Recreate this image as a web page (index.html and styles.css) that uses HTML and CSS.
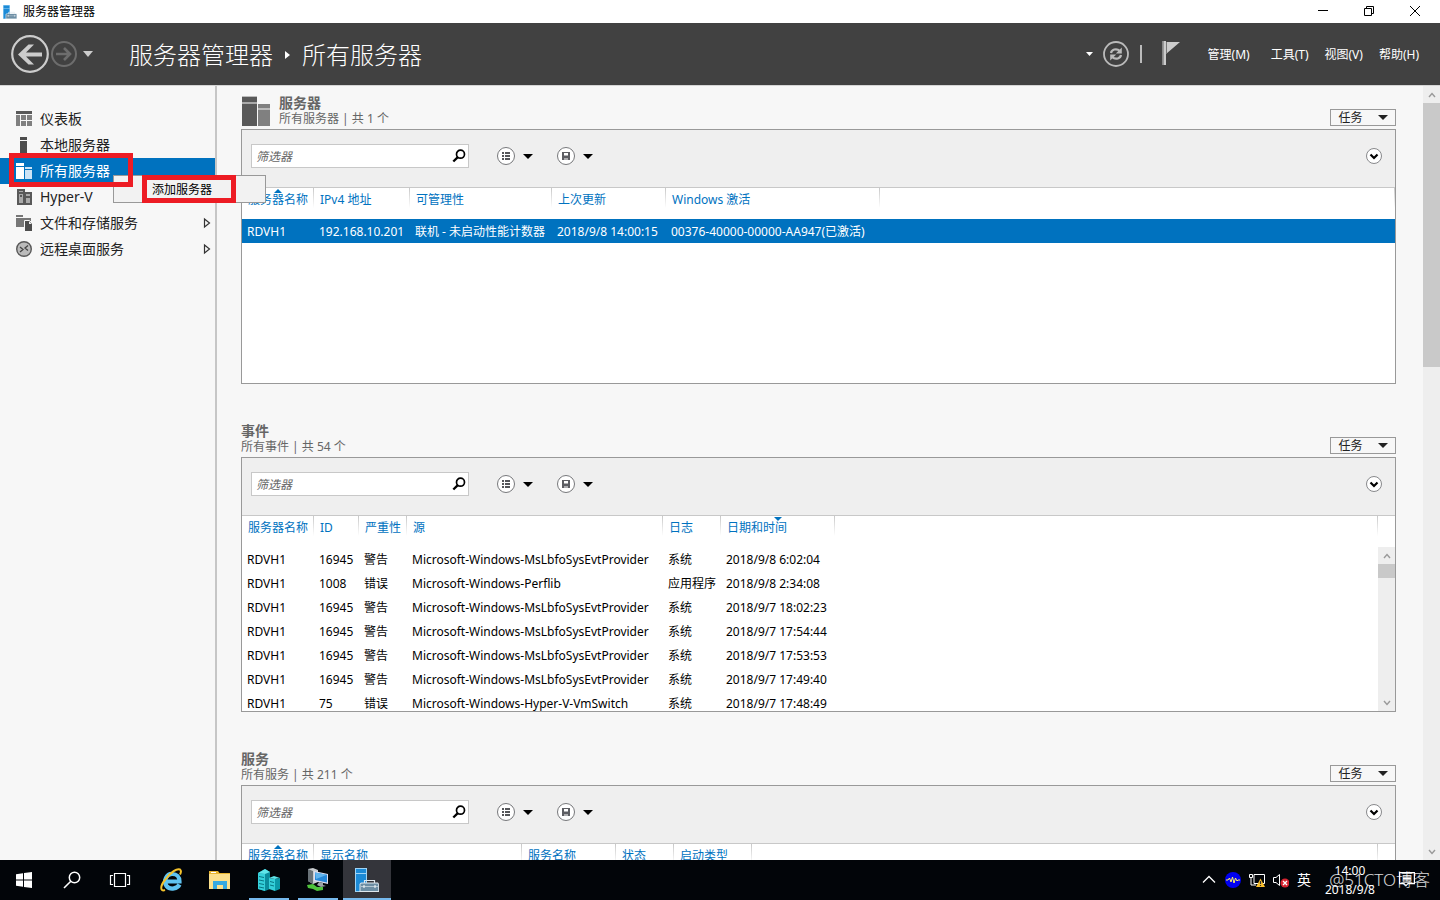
FILE: index.html
```html
<!DOCTYPE html>
<html lang="zh-CN">
<head>
<meta charset="utf-8">
<title>服务器管理器</title>
<link rel="stylesheet" href="styles.css">
</head>
<body>
<svg class="defs" width="0" height="0" aria-hidden="true">
  <symbol id="i-server-manager" viewBox="0 0 24 24">
    <path fill="#9fd4f6" d="M0 0h12v24H0z"/><path fill="#1c8ad6" d="M1 1h10v4H1zM1 6h10v17H1z"/>
    <path fill="none" stroke="#dfe8ee" stroke-width="1.200" d="M9.500 15.500v-3h10v3"/>
    <path fill="#dfe8ee" d="M6 14.500h17l1 1.500v8H4.500v-8z"/><path fill="#6d8ea4" d="M6.500 15.500h16l.700 1v6.500H5.500v-6.500z"/>
    <path stroke="#c6d5df" stroke-width=".8" d="M6 18.500h17"/><path stroke="#fff" d="M9 17v3M20 17v3"/>
  </symbol>
  <symbol id="i-search" viewBox="0 0 14 14"><circle cx="8.500" cy="5.200" r="4" fill="none" stroke="#000" stroke-width="1.700"/><path d="M5.800 8.200L1.300 12.500" stroke="#000" stroke-width="2.400"/></symbol>
  <symbol id="i-list" viewBox="0 0 20 20"><circle cx="10" cy="10" r="8.500" fill="#fff" stroke="#77787b"/><path fill="#55565a" d="M6 6h2v2H6zM9 6h5v2H9zM6 9h2v2H6zM9 9h5v2H9zM6 12h2v2H6zM9 12h5v2H9z"/></symbol>
  <symbol id="i-save" viewBox="0 0 20 20"><circle cx="10" cy="10" r="8.500" fill="#fff" stroke="#77787b"/><path fill="#5c5d62" d="M6 6h8v8H6z"/><path fill="#fff" d="M8 7h4v2.500H8zM8.500 12h1v2h-1zM10.500 12h1v2h-1z"/></symbol>
  <symbol id="i-expand" viewBox="0 0 18 18"><circle cx="9" cy="9" r="7.500" fill="#fff" stroke="#88898c"/><path fill="none" stroke="#000" stroke-width="2.200" d="M5.500 7.500L9 11l3.500-3.500"/></symbol>
  <symbol id="i-up" viewBox="0 0 8 8"><path fill="none" stroke="#999" stroke-width="1.400" d="M1 6l3-3.500L7 6"/></symbol>
  <symbol id="i-down" viewBox="0 0 8 8"><path fill="none" stroke="#999" stroke-width="1.400" d="M1 2l3 3.500L7 2"/></symbol>
  <symbol id="i-more" viewBox="0 0 8 12"><path fill="none" stroke="#333" stroke-width="1.200" d="M1.500 2L6.500 6l-5 4z"/></symbol>
</svg>

<header class="titlebar">
  <svg class="app-icon"><use href="#i-server-manager"/></svg>
  <span class="app-name">服务器管理器</span>
  <div class="window-buttons">
    <button aria-label="最小化"><svg viewBox="0 0 12 12"><path d="M1 5.500h10" stroke="#000"/></svg></button>
    <button aria-label="还原"><svg viewBox="0 0 12 12"><path d="M1.500 3.500h7v7h-7zM3.500 3V1.500h7v7H9" fill="none" stroke="#000"/></svg></button>
    <button aria-label="关闭"><svg viewBox="0 0 12 12"><path d="M1 1l10 10M11 1L1 11" stroke="#000"/></svg></button>
  </div>
</header>

<div class="navbar">
  <button class="back" aria-label="后退"><svg viewBox="0 0 38 38"><circle cx="19" cy="19" r="17.800" fill="none" stroke="#ccc" stroke-width="2.200"/><path fill="#ccc" d="M7 19.500L17.500 9.500H23l-8 8h16v4H15l8 8h-5.500z"/></svg></button>
  <button class="forward" aria-label="前进"><svg viewBox="0 0 26 26"><circle cx="13" cy="13" r="12" fill="none" stroke="#6d6d6d" stroke-width="2"/><path fill="none" stroke="#6d6d6d" stroke-width="2.600" d="M5 13h14M13 7l6 6-6 6"/></svg></button>
  <button class="history" aria-label="历史记录"><svg viewBox="0 0 10 6"><path fill="#ccc" d="M0 0h10L5 6z"/></svg></button>
  <nav class="crumbs">
    <a href="#">服务器管理器</a>
    <svg viewBox="0 0 5 8"><path fill="#fff" d="M0 0l5 4-5 4z"/></svg>
    <h1>所有服务器</h1>
  </nav>
  <div class="nav-tools">
    <button class="small-caret" aria-label="选项"><svg viewBox="0 0 7 4"><path fill="#fff" d="M0 0h7L3.500 4z"/></svg></button>
    <button class="refresh" aria-label="刷新"><svg viewBox="0 0 26 26"><circle cx="13" cy="13" r="12" fill="none" stroke="#bbb" stroke-width="1.800"/><path fill="none" stroke="#bbb" stroke-width="2.200" d="M8 12c.5-3 5-5.500 9-2M18 14c-.5 3-5 5.500-9 2"/><path fill="#bbb" d="M18.800 6.500v6h-6zM7.200 19.500v-6h6z"/></svg></button>
    <span class="divider"></span>
    <button class="flag" aria-label="通知"><svg viewBox="0 0 18 25"><path fill="#888" d="M0 0h1.500v24H0z"/><path fill="#ccc" d="M1.500 0H4v24H1.500zM4 1h14L4 13z"/><path fill="#777" d="M4 1h1v12H4z"/></svg></button>
  </div>
  <nav class="menus"><button>管理(M)</button><button>工具(T)</button><button>视图(V)</button><button>帮助(H)</button></nav>
</div>

<div class="workspace">
  <aside class="sidebar">
    <a href="#"><svg viewBox="0 0 16 16"><path fill="#595959" d="M0 0h16v3H0z"/><path fill="#808080" d="M0 4h4v11H0zM5 4h5v5H5zM11 4h5v5h-5zM5 10h5v5H5zM11 10h5v5h-5z"/></svg><span>仪表板</span></a>
    <a href="#"><svg viewBox="0 0 16 16"><path fill="#4d4d4d" d="M4 0h7v3H4zM4 4h7v12H4z"/></svg><span>本地服务器</span></a>
    <a href="#" class="selected" aria-current="page"><svg viewBox="0 0 16 16"><path fill="#fff" d="M0 0h8v3H0zM0 4h8v12H0z"/><path fill="#cce3f5" d="M9 4h7v2H9zM9 7h7v9H9z"/></svg><span>所有服务器</span></a>
    <a href="#"><svg viewBox="0 0 16 16"><path fill="#595959" d="M1 0h8v3h7v13H1z"/><path fill="#aaa" d="M3 2h4v1H3zM3 5h4v9H3zM10 5h4v2h-4zM10 9h4v5h-4z"/><path fill="#595959" d="M4 6h2v2H4z"/></svg><span>Hyper-V</span></a>
    <a href="#"><svg viewBox="0 0 16 16"><path fill="#777" d="M0 0h7v2H0zM0 3h15v3H8v6H0z"/><path fill="#4d4d4d" stroke="#f8f8f8" d="M8.500 5.500h5l3 3v8h-8z"/><path fill="#eee" d="M13 6v3h3z"/></svg><span>文件和存储服务</span><svg class="more"><use href="#i-more"/></svg></a>
    <a href="#"><svg viewBox="0 0 16 16"><circle cx="8" cy="8" r="7.300" fill="#bbb" stroke="#595959" stroke-width="1.400"/><path fill="none" stroke="#444" stroke-width="1.300" d="M4 6l3 2.500L4 11M12 4.500L9 7l3 2.500"/></svg><span>远程桌面服务</span><svg class="more"><use href="#i-more"/></svg></a>
  </aside>

  <main class="content">
    <section>
      <div class="section-head">
        <svg class="section-icon" viewBox="0 0 28 32"><path fill="#595959" d="M0 2h15v5H0zM0 9h15v22H0z"/><path fill="#aaa" d="M0 7h15v2H0z"/><path fill="#808080" d="M16 9h12v4H16zM16 15h12v16H16z"/><path fill="#bbb" d="M16 13h12v2H16zM0 1h15v1H0z"/></svg>
        <div class="section-title"><h2>服务器</h2><p>所有服务器 | 共 1 个</p></div>
        <button class="tasks">任务<i class="caret"></i></button>
      </div>
      <div class="panel">
        <div class="toolbar">
          <label class="filter"><input type="text" placeholder="筛选器" aria-label="筛选器"><svg><use href="#i-search"/></svg></label>
          <button class="tool" aria-label="查询条件"><svg><use href="#i-list"/></svg><i class="caret"></i></button>
          <button class="tool" aria-label="保存查询"><svg><use href="#i-save"/></svg><i class="caret"></i></button>
          <button class="expand" aria-label="展开"><svg><use href="#i-expand"/></svg></button>
        </div>
        <div class="grid">
          <table>
            <colgroup><col class="w72"><col class="w96"><col class="w142"><col class="w114"><col class="w214"><col></colgroup>
            <thead><tr><th class="asc">服务器名称</th><th>IPv4 地址</th><th>可管理性</th><th>上次更新</th><th>Windows 激活</th><th></th></tr></thead>
            <tbody><tr class="selected"><td>RDVH1</td><td>192.168.10.201</td><td>联机 - 未启动性能计数器</td><td>2018/9/8 14:00:15</td><td>00376-40000-00000-AA947(已激活)</td><td></td></tr></tbody>
          </table>
        </div>
      </div>
    </section>

    <section>
      <div class="section-head">
        <div class="section-title"><h2>事件</h2><p>所有事件 | 共 54 个</p></div>
        <button class="tasks">任务<i class="caret"></i></button>
      </div>
      <div class="panel">
        <div class="toolbar">
          <label class="filter"><input type="text" placeholder="筛选器" aria-label="筛选器"><svg><use href="#i-search"/></svg></label>
          <button class="tool" aria-label="查询条件"><svg><use href="#i-list"/></svg><i class="caret"></i></button>
          <button class="tool" aria-label="保存查询"><svg><use href="#i-save"/></svg><i class="caret"></i></button>
          <button class="expand" aria-label="展开"><svg><use href="#i-expand"/></svg></button>
        </div>
        <div class="grid">
          <table>
            <colgroup><col class="w72"><col class="w45"><col class="w48"><col class="w256"><col class="w58"><col class="w114"><col></colgroup>
            <thead><tr><th>服务器名称</th><th>ID</th><th>严重性</th><th>源</th><th>日志</th><th class="desc">日期和时间</th><th></th></tr></thead>
            <tbody>
              <tr><td>RDVH1</td><td>16945</td><td>警告</td><td>Microsoft-Windows-MsLbfoSysEvtProvider</td><td>系统</td><td>2018/9/8 6:02:04</td><td></td></tr>
              <tr><td>RDVH1</td><td>1008</td><td>错误</td><td>Microsoft-Windows-Perflib</td><td>应用程序</td><td>2018/9/8 2:34:08</td><td></td></tr>
              <tr><td>RDVH1</td><td>16945</td><td>警告</td><td>Microsoft-Windows-MsLbfoSysEvtProvider</td><td>系统</td><td>2018/9/7 18:02:23</td><td></td></tr>
              <tr><td>RDVH1</td><td>16945</td><td>警告</td><td>Microsoft-Windows-MsLbfoSysEvtProvider</td><td>系统</td><td>2018/9/7 17:54:44</td><td></td></tr>
              <tr><td>RDVH1</td><td>16945</td><td>警告</td><td>Microsoft-Windows-MsLbfoSysEvtProvider</td><td>系统</td><td>2018/9/7 17:53:53</td><td></td></tr>
              <tr><td>RDVH1</td><td>16945</td><td>警告</td><td>Microsoft-Windows-MsLbfoSysEvtProvider</td><td>系统</td><td>2018/9/7 17:49:40</td><td></td></tr>
              <tr><td>RDVH1</td><td>75</td><td>错误</td><td>Microsoft-Windows-Hyper-V-VmSwitch</td><td>系统</td><td>2018/9/7 17:48:49</td><td></td></tr>
            </tbody>
          </table>
          <div class="scrollbar inner"><svg><use href="#i-up"/></svg><div class="thumb"></div><svg><use href="#i-down"/></svg></div>
        </div>
      </div>
    </section>

    <section>
      <div class="section-head">
        <div class="section-title"><h2>服务</h2><p>所有服务 | 共 211 个</p></div>
        <button class="tasks">任务<i class="caret"></i></button>
      </div>
      <div class="panel">
        <div class="toolbar">
          <label class="filter"><input type="text" placeholder="筛选器" aria-label="筛选器"><svg><use href="#i-search"/></svg></label>
          <button class="tool" aria-label="查询条件"><svg><use href="#i-list"/></svg><i class="caret"></i></button>
          <button class="tool" aria-label="保存查询"><svg><use href="#i-save"/></svg><i class="caret"></i></button>
          <button class="expand" aria-label="展开"><svg><use href="#i-expand"/></svg></button>
        </div>
        <div class="grid">
          <table>
            <colgroup><col class="w72"><col class="w208"><col class="w94"><col class="w58"><col class="w78"><col></colgroup>
            <thead><tr><th class="asc">服务器名称</th><th>显示名称</th><th>服务名称</th><th>状态</th><th>启动类型</th><th></th></tr></thead>
          </table>
          <div class="gutter"></div>
        </div>
      </div>
    </section>
  </main>
  <div class="scrollbar"><svg><use href="#i-up"/></svg><div class="thumb"></div><svg><use href="#i-down"/></svg></div>
</div>

<div class="context-menu" role="menu"><button role="menuitem">添加服务器</button></div>
<div class="mark mark-nav"></div>
<div class="mark mark-menu"></div>

<footer class="taskbar">
  <button aria-label="开始"><svg viewBox="0 0 24 24"><path fill="#fff" d="M4 6.200l7-1v6.300H4zM12 5l8-1v7.500h-8zM4 12.500h7v6.300l-7-1zM12 12.500h8V20l-8-1z"/></svg></button>
  <button aria-label="搜索"><svg viewBox="0 0 24 24"><circle cx="14.500" cy="9.500" r="5.200" fill="none" stroke="#fff" stroke-width="1.500"/><path stroke="#fff" stroke-width="1.600" d="M10.800 13.200L4 20"/></svg></button>
  <button aria-label="任务视图"><svg viewBox="0 0 24 24"><path fill="none" stroke="#fff" stroke-width="1.200" d="M6.500 5.500h11v13h-11zM5 7.500H2.500v9H5M19 7.500h2.500v9H19"/></svg></button>
  <div class="apps">
    <button aria-label="Internet Explorer"><svg viewBox="0 0 24 24"><path fill="none" stroke="#5fc4f2" stroke-width="4.200" d="M20.500 16.500c-2 4-9 6-13 1.500-3.500-5 0-12.500 6-12 4 0 7 3 7 7.500H7"/><path fill="none" stroke="#f4c22c" stroke-width="2" d="M6 22c-5 2-5-4 0-10C12 4 18 0 21 1.500c1.500 1 1 3 0 5"/></svg></button>
    <button aria-label="文件资源管理器"><svg viewBox="0 0 24 24"><path fill="#e8b530" d="M1 3h9l1.500 2H22v16H1z"/><path fill="#fbe08c" d="M1 6h21v15H1z"/><path fill="#fff" d="M3 4h5v1H3z"/><path fill="#35a9e1" d="M5 13h14v8h-4v-4H9v4H5z"/></svg></button>
    <button class="running" aria-label="服务器"><svg viewBox="0 0 24 24"><path fill="#0b8c9c" d="M1 5l7-4 5 3v17l-5 2-7-2z"/><path fill="#35d0da" d="M1 5l7 1v17l-7-2zM12 10l6 1v12l-6-2z"/><path fill="#5fe6ea" d="M1 5l7-4 5 3-5 2zM12 10l5-2 6 2-5 1z"/><path fill="#0b99a8" d="M18 11l5-1v11l-5 2z"/><path stroke="#077583" d="M2 8.500l5 1M2 12l5 1M2 15.500l5 1M2 19l5 1M13 13.500l4 1M13 17l4 1"/></svg></button>
    <button class="running" aria-label="网络"><svg viewBox="0 0 24 24"><path fill="#c8cccf" d="M2 1l5-1 5 2v12l-5 2-5-3z"/><path fill="#697278" d="M2 1l5 2v13l-5-3z"/><path fill="#dde" d="M8 3l14 3v10L8 13z"/><path fill="#2688d8" d="M9 4.500l12 2.300v7.700L9 12z"/><path fill="#62b5ee" d="M9 4.500l12 2.300L10 11z"/><path fill="#9da4a8" d="M13 14l4 1v2l3 1-5 1-4-2z"/><path fill="#4fc43c" d="M1 17l6-1 4 3h6v3l-6 1-4-2-5-1z"/></svg></button>
    <button class="running active" aria-label="服务器管理器"><svg><use href="#i-server-manager"/></svg></button>
  </div>
  <div class="tray">
    <svg viewBox="0 0 16 16"><path fill="none" stroke="#fff" stroke-width="1.300" d="M2 10.500l6-6 6 6"/></svg>
    <svg viewBox="0 0 16 16"><circle cx="8" cy="8" r="8" fill="#0000f0"/><path fill="none" stroke="#fff066" d="M1 8h2l1.500-2L6 10l1.500-5L9 11l1.500-5L12 9l1-1h2"/></svg>
    <svg viewBox="0 0 16 16"><path fill="none" stroke="#fff" d="M.5 2.500h3v3h-3zM2 6v7h5M5 2.500h10.500v9H5z"/><path fill="#fbc02d" d="M11.500 6.500L16 15H7z"/><path stroke="#333" stroke-width="1.200" d="M11.500 9v3M11.500 13v1"/></svg>
    <svg viewBox="0 0 16 16"><path fill="none" stroke="#fff" d="M.5 5.500H3l3.500-3v11l-3.500-3H.5z"/><circle cx="12" cy="11" r="4.500" fill="#d62430"/><path stroke="#fff" stroke-width="1.300" d="M10 9l4 4M14 9l-4 4"/></svg>
    <span class="ime">英</span>
    <div class="clock"><time>14:00</time><time>2018/9/8</time></div>
    <svg class="notice" viewBox="0 0 16 16"><path fill="none" stroke="#fff" stroke-width="1.200" d="M.600 1.600h14.800v11H9l-2 2-2-2H.600zM4 5h8M4 7.500h8M4 10h8"/></svg>
  </div>
  <span class="watermark">@51CTO博客</span>
</footer>
</body>
</html>
```

FILE: styles.css
```css
* { box-sizing: border-box; }

body {
  margin: 0;
  height: 100vh;
  display: flex;
  flex-direction: column;
  overflow: hidden;
  position: relative;
  background: #f7f7f7;
  color: #000;
  font: 12px/16px "Noto Sans", "Noto Sans CJK SC", sans-serif;
}

button {
  border: 0;
  padding: 0;
  background: none;
  color: inherit;
  font: inherit;
  display: flex;
  align-items: center;
  justify-content: center;
}

a { color: inherit; text-decoration: none; }
h1, h2, p { margin: 0; font-weight: 400; }
svg { display: block; flex: none; }
.defs { position: absolute; }

/* Title bar */
.titlebar { flex: none; height: 23px; display: flex; align-items: center; background: #fff; }
.app-icon { width: 14px; height: 14px; margin: 0 6px 0 3px; }
.window-buttons { display: flex; margin-left: auto; padding-right: 2px; }
.window-buttons button { width: 46px; height: 22px; }
.window-buttons svg { width: 12px; height: 12px; margin-bottom: 2px; }

/* Navigation bar */
.navbar { flex: none; height: 62px; display: flex; align-items: center; padding: 0 21px 0 11px; background: #414141; color: #fff; }
.back svg { width: 38px; height: 38px; }
.forward { margin-left: 2px; }
.forward svg { width: 26px; height: 26px; }
.history { margin-left: 6px; }
.history svg { width: 10px; height: 6px; }
.crumbs { display: flex; align-items: center; margin-left: 36px; padding-top: 1px; font-size: 24px; line-height: 32px; font-weight: 300; }
.crumbs svg { width: 5px; height: 8px; margin: 0 12px; }
.crumbs h1 { font-size: 24px; font-weight: 300; }
.nav-tools { display: flex; align-items: center; margin-left: auto; }
.small-caret svg { width: 7px; height: 4px; }
.refresh { margin-left: 10px; }
.refresh svg { width: 26px; height: 26px; }
.divider { width: 2px; height: 18px; margin: 0 20px 0 11px; background: #bbb; }
.flag svg { width: 18px; height: 25px; margin-bottom: 2px; }
.menus { display: flex; gap: 16px; margin-left: 28px; padding-top: 2px; }
.menus button:first-child { margin-right: 5px; }

/* Workspace */
.workspace { flex: 1; min-height: 0; display: flex; border-top: 1px solid #d5d5d5; }
.sidebar { flex: none; width: 217px; padding-top: 20px; border-right: 2px solid #c6c6c6; font-size: 14px; color: #222; }
.sidebar a { display: flex; align-items: center; height: 26px; padding: 0 4px 0 16px; }
.sidebar svg { width: 16px; height: 16px; margin-right: 8px; }
.sidebar .more { width: 8px; height: 12px; margin: 0 0 0 auto; }
.sidebar .selected { background: #0072bf; color: #fff; }

.content { flex: 1; min-width: 0; overflow: hidden; display: flex; flex-direction: column; gap: 29px; padding: 0 27px 0 24px; margin-top: -1px; }
.content section { flex: none; }
.section-head { display: flex; align-items: flex-end; height: 44px; padding-bottom: 3px; color: #666; }
.section-icon { width: 28px; height: 32px; margin: 0 9px -1px 1px; }
.section-title { margin-bottom: -1px; }
.section-title h2 { font-size: 14px; line-height: 17px; font-weight: 700; }
.tasks { width: 66px; height: 17px; margin-left: auto; gap: 15px; border: 1px solid #999; color: #222; }
.caret { width: 10px; border: 5px solid transparent; border-top-color: currentColor; border-bottom: 0; }

.panel { height: 255px; display: flex; flex-direction: column; overflow: hidden; border: 1px solid #999; background: #fff; }
.toolbar { flex: none; display: flex; align-items: flex-start; height: 58px; padding: 14px 12px 0 9px; background: #efefef; border-bottom: 1px solid #c8c8c8; }
.filter { display: flex; align-items: center; width: 218px; height: 24px; padding: 0 2px 0 4px; margin-right: 27px; border: 1px solid #c8c8c8; background: #fff; }
.filter input { flex: 1; min-width: 0; border: 0; padding: 1px 0 0; outline: 0; background: none; font: inherit; font-style: italic; }
.filter input::placeholder { color: #666; opacity: 1; }
.filter svg { width: 14px; height: 14px; }
.tool { height: 24px; gap: 7px; margin-right: 23px; color: #000; }
.tool svg { width: 20px; height: 20px; }
.expand { height: 24px; margin-left: auto; }
.expand svg { width: 18px; height: 18px; }

/* Tables */
.grid { flex: 1; min-height: 0; display: flex; align-items: flex-start; overflow: hidden; }
table { flex: 1; min-width: 0; table-layout: fixed; border-collapse: collapse; }
th, td { padding: 0 0 0 5px; text-align: left; font-weight: 400; white-space: nowrap; }
th {
  height: 31px;
  padding: 4px 0 0 6px;
  position: relative;
  vertical-align: top;
  color: #0072bf;
  background: linear-gradient(#c8c8c8, #fff) right top / 1px 20px no-repeat;
}
td { height: 24px; padding-top: 2px; }
tr.selected { background: #0072bf; color: #fff; }
.asc::before, .desc::before { content: ""; position: absolute; top: 1px; left: 50%; margin-left: -4px; border: 4px solid transparent; }
.asc::before { border-bottom-color: #0072bf; border-top: 0; }
.desc::before { border-top-color: #0072bf; border-bottom: 0; }
.w45 { width: 45px; } .w48 { width: 48px; } .w58 { width: 58px; } .w72 { width: 72px; }
.w78 { width: 78px; } .w94 { width: 94px; } .w96 { width: 96px; } .w114 { width: 114px; }
.w142 { width: 142px; } .w208 { width: 208px; } .w214 { width: 214px; } .w256 { width: 256px; }

/* Scroll bars */
.scrollbar { flex: none; width: 17px; display: flex; flex-direction: column; align-items: center; background: #eee; }
.scrollbar svg { width: 8px; height: 8px; margin: 5px 0 4px; }
.scrollbar .thumb { width: 17px; height: 264px; margin-bottom: auto; background: #c9c9c9; }
.scrollbar.inner { align-self: stretch; margin-top: 31px; }
.scrollbar.inner .thumb { height: 14px; }
.gutter { flex: none; width: 17px; }

/* Menu and highlight frames lie over the page */
.context-menu { position: absolute; left: 113px; top: 175px; width: 153px; height: 28px; padding: 0 0 0 38px; border: 1px solid #999; background: #f2f2f2; }
.context-menu button { height: 26px; padding-top: 1px; }
.mark { position: absolute; border: 5px solid #ed1c24; pointer-events: none; }
.mark-nav { left: 9px; top: 153px; width: 124px; height: 34px; }
.mark-menu { left: 142px; top: 175px; width: 94px; height: 28px; }

/* Task bar */
.taskbar { flex: none; position: relative; display: flex; height: 40px; background: #020509; color: #fff; }
.taskbar button { width: 48px; height: 40px; }
.taskbar svg { width: 24px; height: 24px; }
.apps { display: flex; gap: 1px; margin-left: 3px; }
.apps .running { background: linear-gradient(#76b9ed, #76b9ed) center bottom / 40px 2px no-repeat; }
.apps .active { background: linear-gradient(#76b9ed, #76b9ed) center bottom / 48px 2px no-repeat #34353b; }
.tray { display: flex; align-items: center; gap: 8px; margin-left: auto; padding-right: 25px; }
.tray svg { width: 16px; height: 16px; }
.ime { font-size: 14px; }
.clock { display: flex; flex-direction: column; align-items: center; margin-left: 6px; line-height: 19px; }
.tray .notice { margin: 0 0 2px 16px; }
.watermark { position: absolute; right: 10px; top: 10px; font-size: 17px; line-height: 20px; font-weight: 300; color: #fff; opacity: 0.85; }
```
